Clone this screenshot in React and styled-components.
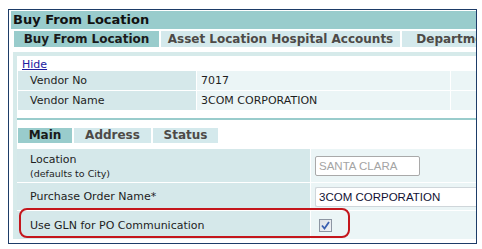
import React from 'react';
import styled, { createGlobalStyle } from 'styled-components';

const GlobalStyle = createGlobalStyle`
    body {
        margin: 0;
        background: #ffffff;
        font-family: "DejaVu Sans", Verdana, sans-serif;
    }
`;

const Page = styled.div`
    padding: 9px 0 0 8px;
`;

const Frame = styled.div`
    width: 465px;
    height: 232px;
    border: 1px solid #1d3c68;
    padding: 1px 0 0 2px;
    overflow: hidden;
    position: relative;
    box-sizing: content-box;
`;

const Inner = styled.div`
    width: 620px;
`;

const Title = styled.div`
    height: 18px;
    line-height: 18px;
    background: #99cccc;
    padding-left: 2px;
    font-size: 13px;
    font-weight: bold;
    color: #111;
`;

const TabRow = styled.div`
    display: flex;
    gap: 2px;
    margin: ${props => props.$margin};
`;

const Tab = styled.div`
    height: ${props => props.$height}px;
    line-height: ${props => props.$height}px;
    width: ${props => props.$width}px;
    text-align: center;
    font-size: 12px;
    font-weight: bold;
    white-space: nowrap;
    overflow: hidden;
    background: ${props => (props.$active ? '#99cccc' : '#d4e9ec')};
    color: ${props => (props.$active ? '#1a1a1a' : '#4d4a47')};
`;

const Panel = styled.div`
    margin: 5px 0 0 2px;
    background: #d6eaea;
    padding: 4px 0 0 4px;
`;

const WhiteArea = styled.div`
    background: #ffffff;
    padding-top: 3px;
`;

const HideLink = styled.a`
    display: block;
    margin-left: 5px;
    height: 12px;
    line-height: 12px;
    font-size: 11px;
    color: #2020a0;
    text-decoration: underline;
`;

const VendorGrid = styled.div`
    display: grid;
    grid-template-columns: 178px 253px 1fr;
    gap: 1px;
    margin: 0 0 0 1px;
    background: #ffffff;
`;

const Cell = styled.div`
    height: ${props => props.$height}px;
    display: flex;
    flex-direction: column;
    justify-content: center;
    box-sizing: border-box;
    padding-left: ${props => props.$pad}px;
    background: ${props => (props.$label ? '#d5e8ea' : '#ebf5f6')};
    font-size: 11px;
    color: #1e1e1e;
    white-space: nowrap;
`;

const Divider = styled.div`
    height: 2px;
    background: #99cccc;
    margin-top: 8px;
`;

const Small = styled.span`
    font-size: 9.5px;
    margin-top: 2px;
`;

const FormGrid = styled.div`
    display: grid;
    grid-template-columns: 293px 1fr;
    gap: 1px;
    padding-top: 1px;
    margin-top: 5px;
    background: #ffffff;
`;

const Input = styled.div`
    width: ${props => props.$width};
    height: 20px;
    line-height: 18px;
    box-sizing: border-box;
    border: 1px solid ${props => (props.$disabled ? '#a9a9a9' : '#cfd6da')};
    border-right: ${props => (props.$disabled ? '1px solid #a9a9a9' : 'none')};
    border-radius: 2px;
    background: #ffffff;
    padding-left: 3px;
    font-family: "Liberation Sans", Arial, sans-serif;
    font-size: 11.5px;
    color: ${props => (props.$disabled ? '#a4a4a4' : '#111133')};
`;

const CheckBox = styled.div`
    width: 11px;
    height: 11px;
    margin-left: 8px;
    border: 1px solid #8d96a3;
    background: linear-gradient(135deg, #dde1e7, #f1f3f6);
    display: flex;
    align-items: center;
    justify-content: center;
`;

const Highlight = styled.div`
    position: absolute;
    left: 10px;
    top: 198px;
    width: 327px;
    height: 26px;
    border: 2px solid #c4161c;
    border-radius: 8px;
    pointer-events: none;
`;

export default function App() {
    return (
        <>
            <GlobalStyle />
            <Page>
                <Frame>
                    <Inner>
                        <Title>Buy From Location</Title>
                        <TabRow $margin="2px 0 0 3px">
                            <Tab $active $height={16} $width={145}>Buy From Location</Tab>
                            <Tab $height={16} $width={239}>Asset Location Hospital Accounts</Tab>
                            <Tab $height={16} $width={110}>Department</Tab>
                        </TabRow>
                        <Panel>
                            <WhiteArea>
                                <HideLink href="#">Hide</HideLink>
                                <VendorGrid>
                                    <Cell $label $height={19} $pad={12}>Vendor No</Cell>
                                    <Cell $height={19} $pad={4}>7017</Cell>
                                    <Cell $height={19} $pad={4} />
                                    <Cell $label $height={19} $pad={12}>Vendor Name</Cell>
                                    <Cell $height={19} $pad={4}>3COM CORPORATION</Cell>
                                    <Cell $height={19} $pad={4} />
                                </VendorGrid>
                                <Divider />
                                <TabRow $margin="8px 0 0 1px">
                                    <Tab $active $height={15} $width={54}>Main</Tab>
                                    <Tab $height={15} $width={77}>Address</Tab>
                                    <Tab $height={15} $width={65}>Status</Tab>
                                </TabRow>
                                <FormGrid>
                                    <Cell $label $height={33} $pad={13}>
                                        <span>Location</span>
                                        <Small>(defaults to City)</Small>
                                    </Cell>
                                    <Cell $height={33} $pad={4}>
                                        <Input $disabled $width="105px">SANTA CLARA</Input>
                                    </Cell>
                                    <Cell $label $height={27} $pad={13}>Purchase Order Name*</Cell>
                                    <Cell $height={27} $pad={4}>
                                        <Input $width="200px">3COM CORPORATION</Input>
                                    </Cell>
                                    <Cell $label $height={28} $pad={13}>Use GLN for PO Communication</Cell>
                                    <Cell $height={28} $pad={0}>
                                        <CheckBox>
                                            <svg width="9" height="9" viewBox="0 0 9 9">
                                                <path d="M1 4.5 L3.5 7.5 L8 1" fill="none" stroke="#3a5fb0" strokeWidth="1.8" />
                                            </svg>
                                        </CheckBox>
                                    </Cell>
                                </FormGrid>
                            </WhiteArea>
                        </Panel>
                    </Inner>
                    <Highlight />
                </Frame>
            </Page>
        </>
    );
}
